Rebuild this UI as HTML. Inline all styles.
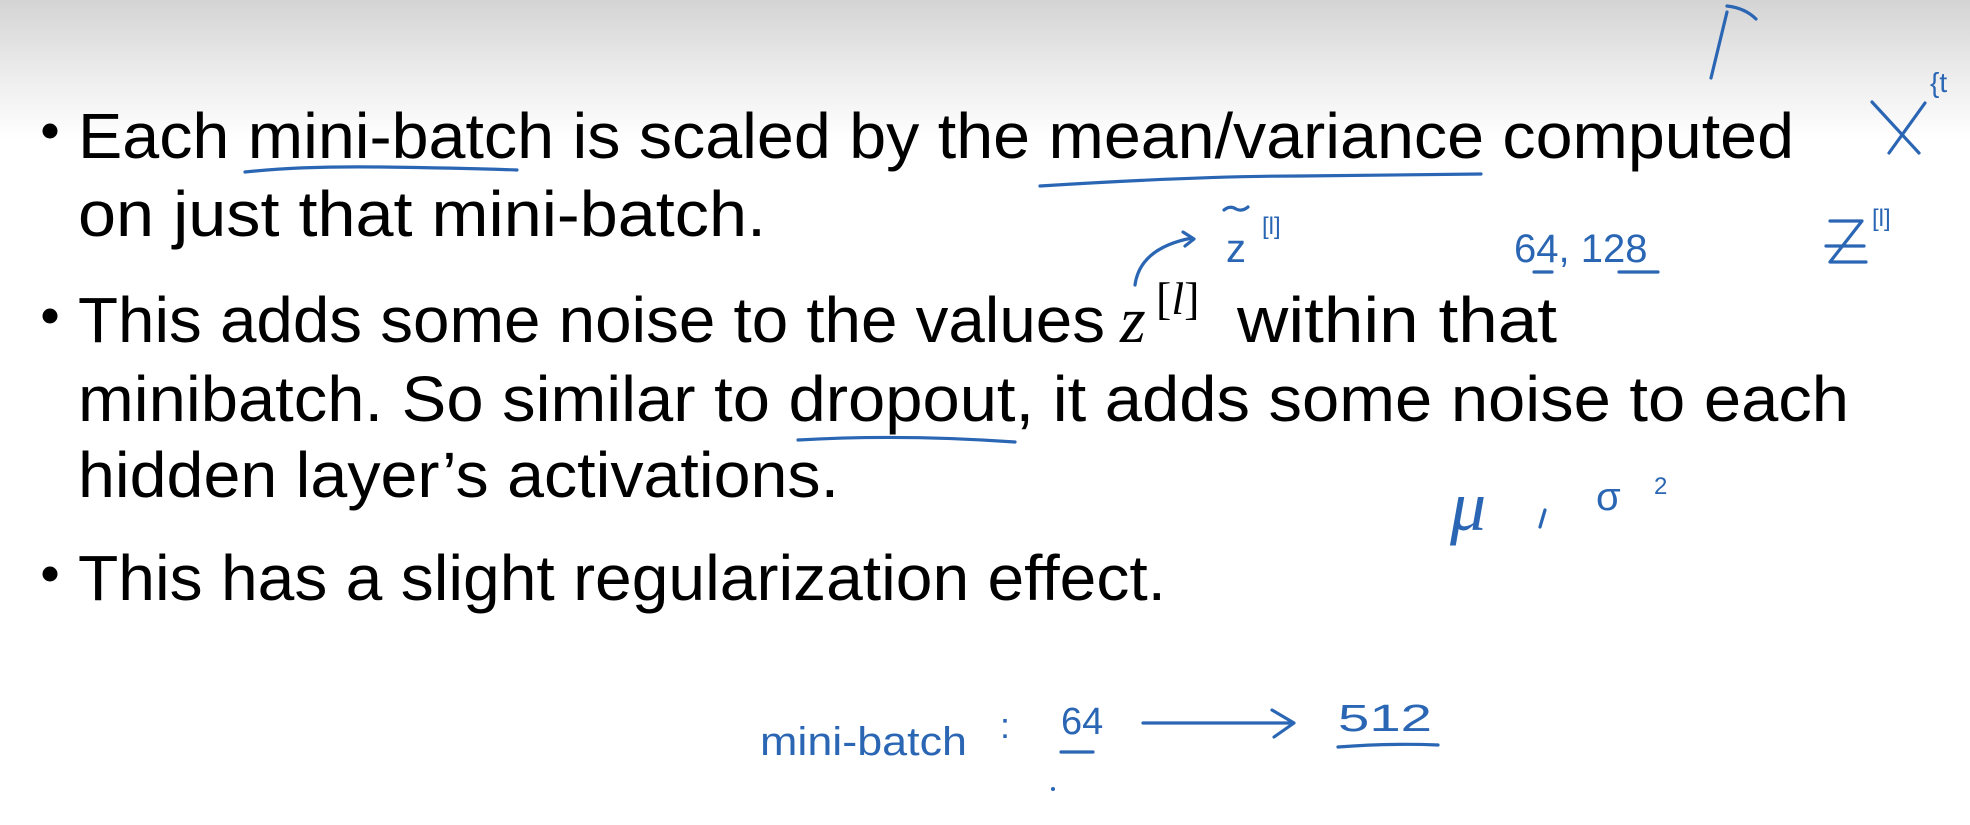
<!DOCTYPE html>
<html><head><meta charset="utf-8"><style>
html,body{margin:0;padding:0;background:#fff}
svg{display:block}
</style></head><body>
<svg width="1970" height="825" viewBox="0 0 1970 825" xmlns="http://www.w3.org/2000/svg">
<defs><linearGradient id="g" x1="0" y1="0" x2="0" y2="1">
<stop offset="0" stop-color="#d4d4d4"/><stop offset="0.55" stop-color="#ededed"/><stop offset="1" stop-color="#ffffff"/></linearGradient></defs>
<rect width="1970" height="825" fill="#fff"/>
<rect width="1970" height="140" fill="url(#g)"/>
<g font-family="Liberation Sans, sans-serif" font-size="64" fill="#000">
<circle cx="50" cy="131" r="7.5"/>
<text x="78" y="158" textLength="1716" lengthAdjust="spacingAndGlyphs">Each mini-batch is scaled by the mean/variance computed</text>
<text x="78" y="236" textLength="688" lengthAdjust="spacingAndGlyphs">on just that mini-batch.</text>
<circle cx="50" cy="316" r="7.5"/>
<text x="78" y="342" textLength="1027" lengthAdjust="spacingAndGlyphs">This adds some noise to the values</text>
<text x="1120" y="342" font-family="Liberation Serif, serif" font-style="italic" font-size="66">z</text>
<text x="1156" y="314" font-family="Liberation Serif, serif" font-size="46">[<tspan font-style="italic">l</tspan>]</text>
<text x="1237" y="342" textLength="320" lengthAdjust="spacingAndGlyphs">within that</text>
<text x="78" y="421" textLength="1771" lengthAdjust="spacingAndGlyphs">minibatch. So similar to dropout, it adds some noise to each</text>
<text x="78" y="497" textLength="761" lengthAdjust="spacingAndGlyphs">hidden layer’s activations.</text>
<circle cx="50" cy="574" r="7.5"/>
<text x="78" y="600" textLength="1088" lengthAdjust="spacingAndGlyphs">This has a slight regularization effect.</text>
</g>
<g stroke="#2a66b3" stroke-width="3.2" fill="none" stroke-linecap="round" stroke-linejoin="round">
<path d="M245 172 Q300 166 380 167 Q460 168 517 170"/>
<path d="M1040 186 Q1200 176 1300 176 Q1400 175 1481 174"/>
<path d="M798 440 Q900 434 1015 442"/>
<path d="M1711 78 L1727 12 M1727 6 Q1745 8 1756 19"/>
<path d="M1872 102 L1919 153 M1925 103 L1889 153"/>
<path d="M1135 285 Q1140 248 1192 238 M1183 232 L1194 239 L1185 246"/>
<path d="M1224 210 Q1230 205 1236 209 Q1242 212 1248 207"/>
<path d="M1534 272 L1552 272 M1619 272 L1658 272"/>
<path d="M1061 752 L1093 752 M1338 747 Q1390 743 1438 745"/>
<path d="M1143 723 L1292 723 M1272 710 L1294 723 L1274 737"/>
<path d="M1545 510 L1540 527"/>
<path d="M1830 221 L1862 221 L1830 262 L1866 262 M1826 246 L1864 246"/>
</g>
<g fill="#2a66b3" font-family="Liberation Sans, sans-serif">
<text x="1226" y="262" font-size="40">z</text>
<text x="1262" y="234" font-size="24">[l]</text>
<text x="1514" y="262" font-size="40">64, 128</text>
<text x="1872" y="226" font-size="24">[l]</text>
<text x="1930" y="92" font-size="28">{t</text>
<text x="1450" y="530" font-size="72" font-family="Liberation Serif, serif" font-style="italic">μ</text>
<text x="1596" y="510" font-size="40">σ</text>
<text x="1654" y="494" font-size="24">2</text>
<text x="760" y="755" font-size="40" textLength="207" lengthAdjust="spacingAndGlyphs">mini-batch</text>
<text x="1000" y="738" font-size="36">:</text>
<text x="1061" y="734" font-size="38">64</text>
<text x="1338" y="731" font-size="38" textLength="94" lengthAdjust="spacingAndGlyphs">512</text>
<circle cx="1053" cy="789" r="2"/>
</g>
</svg>
</body></html>
